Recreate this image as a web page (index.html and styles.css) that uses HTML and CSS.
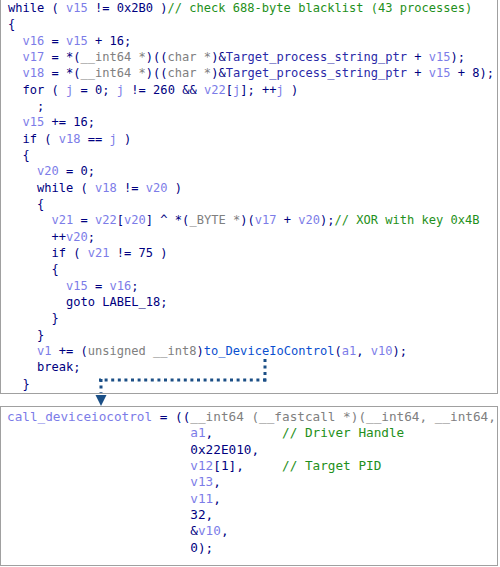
FILE: index.html
```html
<!DOCTYPE html>
<html>
<head>
<meta charset="utf-8">
<link rel="stylesheet" href="styles.css">
</head>
<body>
<div class="figure">
<div class="box box-top">
<div class="ln"><span class="k">while</span> ( <span class="v">v15</span> != 0x2B0 )<span class="c">// check 688-byte blacklist (43 processes)</span></div>
<div class="ln">{</div>
<div class="ln">  <span class="v">v16</span> = <span class="v">v15</span> + 16;</div>
<div class="ln">  <span class="v">v17</span> = *(<span class="t">__int64 *</span>)((<span class="t">char *</span>)&amp;<span class="g">Target_process_string_ptr</span> + <span class="v">v15</span>);</div>
<div class="ln">  <span class="v">v18</span> = *(<span class="t">__int64 *</span>)((<span class="t">char *</span>)&amp;<span class="g">Target_process_string_ptr</span> + <span class="v">v15</span> + 8);</div>
<div class="ln">  <span class="k">for</span> ( <span class="v">j</span> = 0; <span class="v">j</span> != 260 &amp;&amp; <span class="v">v22</span>[<span class="v">j</span>]; ++<span class="v">j</span> )</div>
<div class="ln">    ;</div>
<div class="ln">  <span class="v">v15</span> += 16;</div>
<div class="ln">  <span class="k">if</span> ( <span class="v">v18</span> == <span class="v">j</span> )</div>
<div class="ln">  {</div>
<div class="ln">    <span class="v">v20</span> = 0;</div>
<div class="ln">    <span class="k">while</span> ( <span class="v">v18</span> != <span class="v">v20</span> )</div>
<div class="ln">    {</div>
<div class="ln">      <span class="v">v21</span> = <span class="v">v22</span>[<span class="v">v20</span>] ^ *(<span class="t">_BYTE *</span>)(<span class="v">v17</span> + <span class="v">v20</span>);<span class="c">// XOR with key 0x4B</span></div>
<div class="ln">      ++<span class="v">v20</span>;</div>
<div class="ln">      <span class="k">if</span> ( <span class="v">v21</span> != 75 )</div>
<div class="ln">      {</div>
<div class="ln">        <span class="v">v15</span> = <span class="v">v16</span>;</div>
<div class="ln">        <span class="k">goto</span> LABEL_18;</div>
<div class="ln">      }</div>
<div class="ln">    }</div>
<div class="ln">    <span class="v">v1</span> += (<span class="t">unsigned __int8</span>)<span class="f">to_DeviceIoControl</span>(<span class="v">a1</span>, <span class="v">v10</span>);</div>
<div class="ln">    <span class="k">break</span>;</div>
<div class="ln">  }</div>
</div>
<div class="box box-bottom">
<div class="ln"><span class="v">call_deviceiocotrol</span> = ((<span class="t">__int64 (__fastcall *)(__int64, __int64,</span></div>
<div class="ln">                        <span class="v">a1</span>,         <span class="c">// Driver Handle</span></div>
<div class="ln">                        0x22E010,</div>
<div class="ln">                        <span class="v">v12</span>[1],     <span class="c">// Target PID</span></div>
<div class="ln">                        <span class="v">v13</span>,</div>
<div class="ln">                        <span class="v">v11</span>,</div>
<div class="ln">                        32,</div>
<div class="ln">                        &amp;<span class="v">v10</span>,</div>
<div class="ln">                        0);</div>
</div>
<svg class="connector" width="500" height="567" viewBox="0 0 500 567">
  <g fill="#1b4f86">
    <rect x="263.5" y="359" width="3" height="3"/>
    <rect x="263.5" y="365.5" width="3" height="3"/>
    <rect x="263.5" y="372" width="3" height="3"/>
    <rect x="263.5" y="378.5" width="3" height="3"/>
  </g>
  <line x1="266" y1="380" x2="99" y2="380" stroke="#1b4f86" stroke-width="3" stroke-dasharray="3 3.6"/>
  <line x1="101" y1="379" x2="101" y2="393" stroke="#1b4f86" stroke-width="3" stroke-dasharray="3 3.6"/>
  <polygon points="95.5,395 106.5,395 101,406" fill="#1b4f86"/>
</svg>
</div>
</body>
</html>
```
FILE: styles.css
```css
html, body {
  margin: 0;
  padding: 0;
  background: #ffffff;
}

.figure {
  position: relative;
  width: 500px;
  height: 567px;
}

.box {
  margin: 0;
  box-sizing: border-box;
  width: 498px;
  font-family: "DejaVu Sans Mono", "Liberation Mono", monospace;
  color: #000080;
  overflow: hidden;
  background: #ffffff;
}

.ln {
  height: 16.33px;
  line-height: 16.33px;
  white-space: pre;
}

.box-top {
  font-size: 12.05px;
  border-left: 1px solid #a0a0a0;
  border-right: 1px solid #a0a0a0;
  border-bottom: 1px solid #a0a0a0;
  padding: 0 0 1px 7px;
  height: 394px;
}

.box-bottom {
  font-size: 12.7px;
  margin-top: 12px;
  border: 1px solid #a0a0a0;
  padding: 2px 0 0 6px;
  height: 160px;
}

.k { color: #000080; }
.v { color: #7c7ce8; }
.t { color: #808080; }
.g { color: #2a2aa8; }
.f { color: #0a4fd0; }
.c { color: #1f9020; }

.connector {
  position: absolute;
  top: 0;
  left: 0;
  pointer-events: none;
}
```
